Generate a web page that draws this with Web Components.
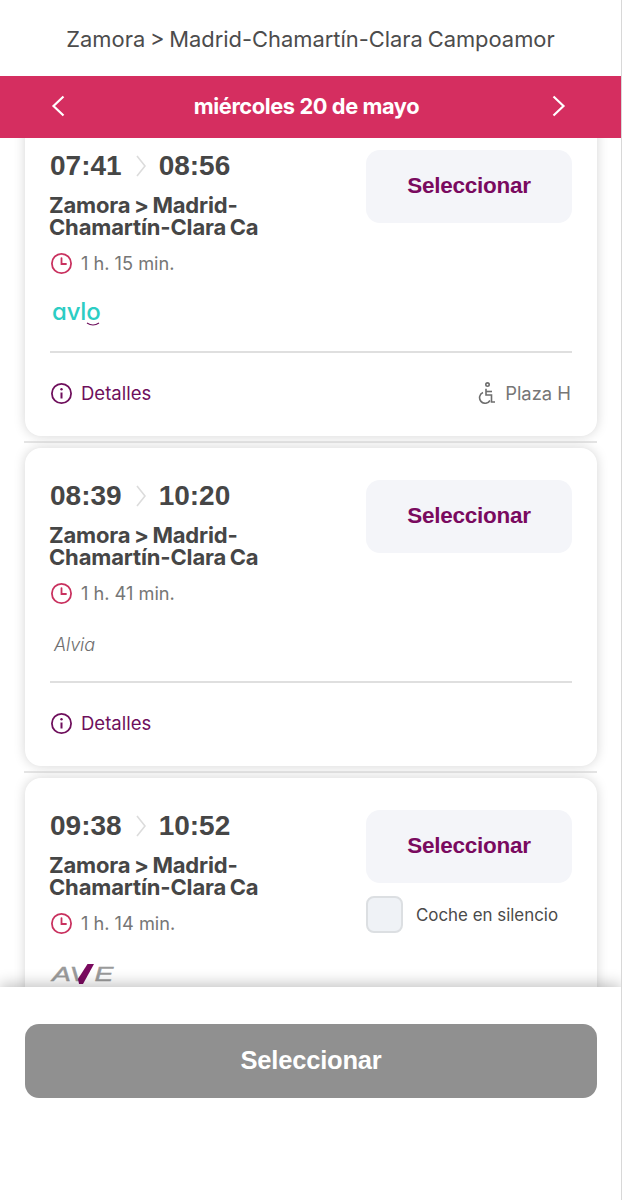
<!DOCTYPE html>
<html lang="es">
<head>
<meta charset="utf-8">
<title>Trenes</title>
<style>
    html, body { margin: 0; height: 100%; background: #fff; }
    body { font-family: Inter, "Liberation Sans", sans-serif; }
</style>
</head>
<body>
<trip-screen>
    <route-header slot="header">Zamora &gt; Madrid-Chamartín-Clara Campoamor</route-header>
    <date-bar slot="header">miércoles 20 de mayo</date-bar>

    <train-card dep="07:41" arr="08:56" route="Zamora > Madrid-Chamartín-Clara Ca" duration="1 h. 15 min.">
        <avlo-logo slot="logo"></avlo-logo>
        <plaza-tag slot="extra">Plaza H</plaza-tag>
    </train-card>
    <train-card dep="08:39" arr="10:20" route="Zamora > Madrid-Chamartín-Clara Ca" duration="1 h. 41 min.">
        <alvia-logo slot="logo">Alvia</alvia-logo>
    </train-card>
    <train-card dep="09:38" arr="10:52" route="Zamora > Madrid-Chamartín-Clara Ca" duration="1 h. 14 min.">
        <ave-logo slot="logo"></ave-logo>
        <silence-check slot="option">Coche en silencio</silence-check>
    </train-card>

    <select-footer slot="footer">Seleccionar</select-footer>
</trip-screen>

<script>
// Page frame: fixed header, clipped list of cards, footer on top
class TripScreen extends HTMLElement {
    constructor() {
        super();
        const shadow = this.attachShadow({mode: "open"});
        shadow.innerHTML = `
            <style>
                :host {
                    display: flex;
                    flex-direction: column;
                    height: 1200px;
                    overflow: hidden;
                    background: #fff;
                    border-right: 1px solid #d8d8d8;
                    box-sizing: border-box;
                }
                header { position: relative; z-index: 2; }
                .list {
                    flex: 1;
                    min-height: 0;
                    overflow: hidden;
                    padding: 0 25px 0 25px;
                    margin-right: -1px;
                }
                .inner {
                    display: flex;
                    flex-direction: column;
                    margin-top: -20px;
                }
                footer { position: relative; z-index: 2; }
            </style>
            <header><slot name="header"></slot></header>
            <div class="list"><div class="inner"><slot></slot></div></div>
            <footer><slot name="footer"></slot></footer>
        `;
    }
}

class RouteHeader extends HTMLElement {
    constructor() {
        super();
        const shadow = this.attachShadow({mode: "open"});
        shadow.innerHTML = `
            <style>
                :host {
                    display: flex;
                    align-items: center;
                    justify-content: center;
                    height: 76px;
                    padding-top: 2px;
                    box-sizing: border-box;
                    font-size: 21.9px;
                    word-spacing: -1.4px;
                    color: #4c4c4c;
                    background: #fff;
                }
            </style>
            <slot></slot>
        `;
    }
}

class DateBar extends HTMLElement {
    constructor() {
        super();
        const shadow = this.attachShadow({mode: "open"});
        shadow.innerHTML = `
            <style>
                :host {
                    display: flex;
                    align-items: center;
                    justify-content: space-between;
                    height: 62px;
                    padding: 0 55px 2px 51px;
                    box-sizing: border-box;
                    background: #d52e60;
                    color: #fff;
                    font-size: 21.8px;
                    font-weight: 700;
                    letter-spacing: -0.4px;
                }
                span { margin-right: 4px; }
                svg { display: block; fill: none; stroke: #fff; stroke-width: 2.2; }
            </style>
            <svg width="14" height="22" viewBox="0 0 14 22"><path d="M12.5 1.5 L2.5 11 L12.5 20.5"/></svg>
            <span><slot></slot></span>
            <svg width="14" height="22" viewBox="0 0 14 22"><path d="M1.5 1.5 L11.5 11 L1.5 20.5"/></svg>
        `;
    }
}

// One train result. Logo, option under the button and right footer text come in through slots
class TrainCard extends HTMLElement {
    constructor() {
        super();
        const shadow = this.attachShadow({mode: "open"});
        const dep = this.getAttribute('dep');
        const arr = this.getAttribute('arr');
        const route = this.getAttribute('route').replace('>', '&gt;');
        const duration = this.getAttribute('duration');
        shadow.innerHTML = `
            <style>
                :host { display: block; flex: none; }
                /* line between two cards */
                :host(:not(:last-child))::after {
                    content: ' ';
                    display: block;
                    height: 2px;
                    margin: 5px 0 5px -1px;
                    background: #e4e4e4;
                }
                .card {
                    height: 318px;
                    box-sizing: border-box;
                    padding: 30px 25px 0 25px;
                    background: #fff;
                    border-radius: 16px;
                    box-shadow: 0 0 12px rgba(0,0,0,.17);
                }
                .top { display: flex; justify-content: space-between; height: 203px; }
                .times {
                    display: flex;
                    align-items: center;
                    height: 34px;
                    padding-top: 1px;
                    box-sizing: border-box;
                    font: 700 28px "Liberation Sans", sans-serif;
                    color: #464646;
                }
                .times svg { margin: 0 13px 0 14px; fill: none; stroke: #dcdcdc; stroke-width: 1.6; }
                .route {
                    width: 262px;
                    margin: 12px 0 0 -1px;
                    font-size: 22px;
                    line-height: 22px;
                    font-weight: 700;
                    color: #464646;
                    letter-spacing: -0.15px;
                    word-spacing: -1.5px;
                }
                .duration {
                    display: flex;
                    align-items: center;
                    gap: 8px;
                    height: 24px;
                    margin-top: 13px;
                    font-size: 18.2px;
                    color: #767676;
                }
                .logo { display: flex; align-items: center; height: 32px; margin-top: 23px; }
                .side { width: 206px; margin-top: 2px; }
                .pick {
                    display: flex;
                    align-items: center;
                    justify-content: center;
                    height: 73px;
                    padding-bottom: 2px;
                    box-sizing: border-box;
                    border-radius: 14px;
                    background: #f4f5f9;
                    color: #7a0a5f;
                    font: 700 22.5px "Liberation Sans", sans-serif;
                    letter-spacing: -0.25px;
                }
                hr { height: 2px; margin: 0; border: 0; background: #dfdfdf; }
                .bottom {
                    display: flex;
                    align-items: center;
                    justify-content: space-between;
                    height: 24px;
                    margin-top: 28px;
                }
                .details {
                    display: flex;
                    align-items: center;
                    gap: 8px;
                    font-size: 18.5px;
                    color: #6f0f5c;
                }
            </style>
            <div class="card">
                <div class="top">
                    <div>
                        <div class="times">
                            <span>${dep}</span>
                            <svg width="10" height="22" viewBox="0 0 10 22"><path d="M1 1 L9 11 L1 21"/></svg>
                            <span>${arr}</span>
                        </div>
                        <div class="route">${route}</div>
                        <div class="duration">
                            <svg width="23" height="23" viewBox="0 0 23 23" fill="none" stroke="#c9315f" stroke-width="1.8">
                                <circle cx="11.5" cy="11.5" r="9.6"/>
                                <path d="M11.5 6.2 V12 H16" stroke-linecap="round"/>
                            </svg>
                            <span>${duration}</span>
                        </div>
                        <div class="logo"><slot name="logo"></slot></div>
                    </div>
                    <div class="side">
                        <div class="pick">Seleccionar</div>
                        <slot name="option"></slot>
                    </div>
                </div>
                <hr>
                <div class="bottom">
                    <div class="details">
                        <svg width="23" height="23" viewBox="0 0 23 23" fill="none" stroke="#6f0f5c" stroke-width="1.8">
                            <circle cx="11.5" cy="11.5" r="9.6"/>
                            <path d="M11.5 10.5 V16.5" stroke-width="2"/>
                            <circle cx="11.5" cy="7.2" r="1.2" fill="#6f0f5c" stroke="none"/>
                        </svg>
                        <span>Detalles</span>
                    </div>
                    <slot name="extra"></slot>
                </div>
            </div>
        `;
    }
}

class AvloLogo extends HTMLElement {
    constructor() {
        super();
        const shadow = this.attachShadow({mode: "open"});
        shadow.innerHTML = `
            <style>
                :host {
                    display: block;
                    position: relative;
                    margin: -4px 0 0 2px;
                    font: 500 24px/26px Inter, sans-serif;
                    font-feature-settings: "cv11";
                    letter-spacing: -0.2px;
                    color: #2ccdc4;
                }
                /* small smile under the o */
                svg { position: absolute; left: 34px; top: 23px; fill: none; stroke: #6f0f5c; stroke-width: 1.2; }
            </style>
            <span>avlo</span>
            <svg width="14" height="6" viewBox="0 0 14 6"><path d="M1 1 Q7 5 13 1"/></svg>
        `;
    }
}

class AlviaLogo extends HTMLElement {
    constructor() {
        super();
        const shadow = this.attachShadow({mode: "open"});
        shadow.innerHTML = `
            <style>
                :host {
                    display: block;
                    margin-left: 4px;
                    font-size: 18px;
                    font-style: italic;
                    font-weight: 300;
                    letter-spacing: -0.1px;
                    color: #6e6e6e;
                }
            </style>
            <slot></slot>
        `;
    }
}

class AveLogo extends HTMLElement {
    constructor() {
        super();
        const shadow = this.attachShadow({mode: "open"});
        shadow.innerHTML = `
            <style>
                :host { display: block; margin: 0 0 0 2px; }
                svg { display: block; overflow: visible; }
                text { font: italic 400 21px "Liberation Sans", sans-serif; fill: #9a9a9a; stroke: #9a9a9a; stroke-width: .4; }
            </style>
            <svg width="62" height="20" viewBox="0 0 62 20">
                <g transform="scale(1.35 1)"><text x="0 13 31.5" y="17">AVE</text></g>
                <polygon points="35.5,0 42,0 31,20 27,20 26,15" fill="#7a0a5f"/>
            </svg>
        `;
    }
}

class PlazaTag extends HTMLElement {
    constructor() {
        super();
        const shadow = this.attachShadow({mode: "open"});
        shadow.innerHTML = `
            <style>
                :host {
                    display: flex;
                    align-items: center;
                    gap: 9px;
                    margin-right: 1px;
                    font-size: 18.4px;
                    color: #767676;
                }
            </style>
            <svg width="18" height="22" viewBox="0 0 18 22" fill="none" stroke="#6e6e6e" stroke-width="1.6">
                <circle cx="9.5" cy="2.6" r="1.7"/>
                <path d="M8 6.8 V13 H13.5 V20 H17"/>
                <path d="M8 9.5 H14"/>
                <path d="M5 10.5 A5.6 5.6 0 1 0 12 18.5"/>
            </svg>
            <span><slot></slot></span>
        `;
    }
}

class SilenceCheck extends HTMLElement {
    constructor() {
        super();
        const shadow = this.attachShadow({mode: "open"});
        shadow.innerHTML = `
            <style>
                :host {
                    display: flex;
                    align-items: center;
                    gap: 13px;
                    margin-top: 13px;
                    font-size: 16.9px;
                    color: #4a4a4a;
                }
                .box {
                    width: 37px;
                    height: 37px;
                    box-sizing: border-box;
                    border: 2px solid #dcdfe2;
                    border-radius: 8px;
                    background: #eff2f6;
                }
            </style>
            <div class="box"></div>
            <span><slot></slot></span>
        `;
    }
}

class SelectFooter extends HTMLElement {
    constructor() {
        super();
        const shadow = this.attachShadow({mode: "open"});
        shadow.innerHTML = `
            <style>
                :host {
                    display: block;
                    height: 213px;
                    box-sizing: border-box;
                    padding: 37px 24px 0 25px;
                    background: #fff;
                    box-shadow: 0 -3px 14px rgba(0,0,0,.24);
                }
                .btn {
                    display: flex;
                    align-items: center;
                    justify-content: center;
                    height: 74px;
                    padding-bottom: 2px;
                    box-sizing: border-box;
                    border-radius: 14px;
                    background: #909090;
                    color: #fff;
                    font: 700 25.5px "Liberation Sans", sans-serif;
                    letter-spacing: -0.2px;
                }
            </style>
            <div class="btn"><slot></slot></div>
        `;
    }
}

customElements.define('trip-screen', TripScreen);
customElements.define('route-header', RouteHeader);
customElements.define('date-bar', DateBar);
customElements.define('train-card', TrainCard);
customElements.define('avlo-logo', AvloLogo);
customElements.define('alvia-logo', AlviaLogo);
customElements.define('ave-logo', AveLogo);
customElements.define('plaza-tag', PlazaTag);
customElements.define('silence-check', SilenceCheck);
customElements.define('select-footer', SelectFooter);
</script>
</body>
</html>
